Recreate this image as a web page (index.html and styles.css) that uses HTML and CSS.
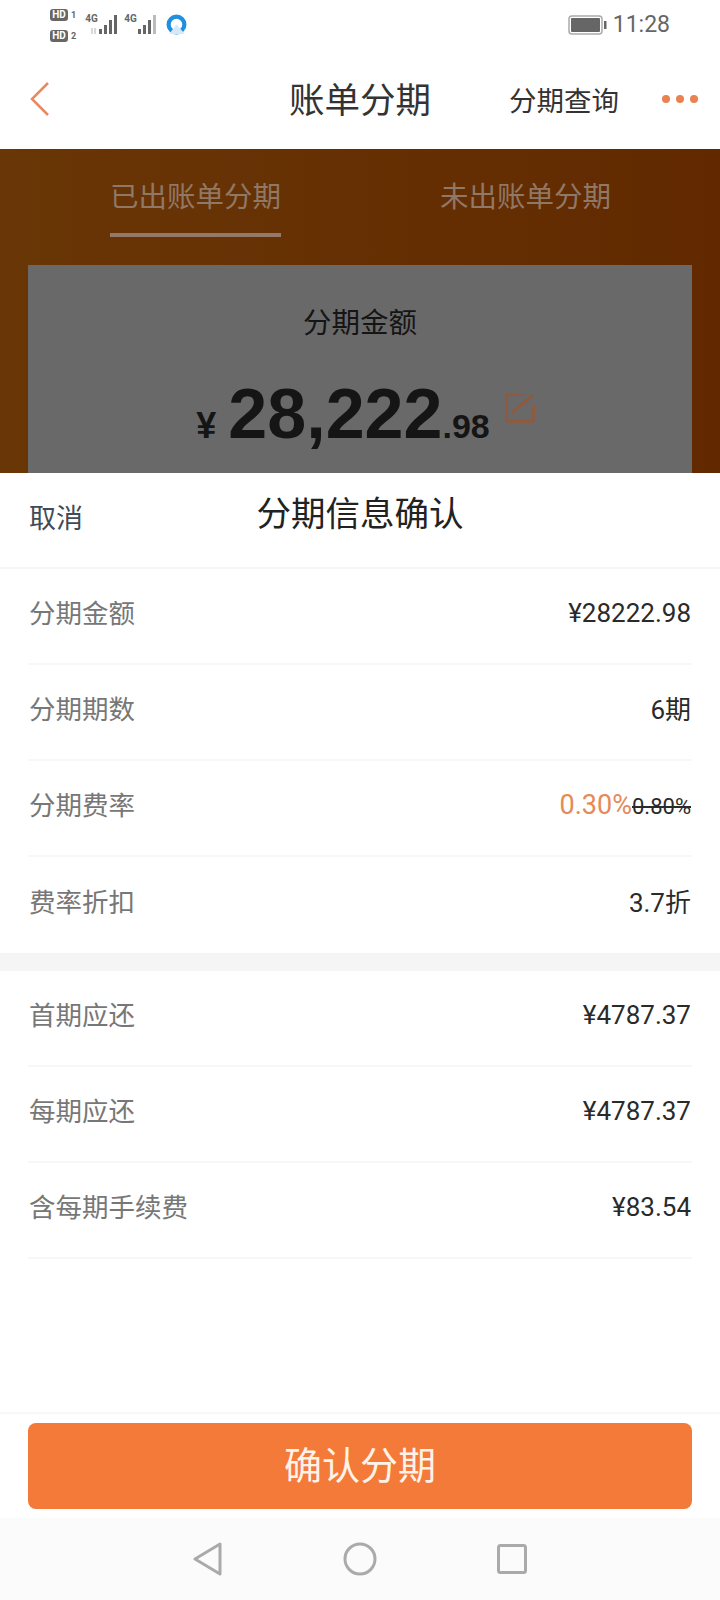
FILE: index.html
```html
<!DOCTYPE html>
<html lang="zh-CN">
<head>
  <meta charset="UTF-8">
  <meta name="viewport" content="width=device-width, initial-scale=1.0">
  <title>账单分期</title>
  <link rel="stylesheet" href="styles.css">
</head>
<body>
  <!-- status bar -->
  <div class="status-bar">
    <div class="status-left">
      <div class="sim-col">
        <div class="sim-row"><span class="hd">HD</span><span class="sim-num">1</span></div>
        <div class="sim-row"><span class="hd">HD</span><span class="sim-num">2</span></div>
      </div>
      <div class="signal">
        <span class="net">4G</span>
        <svg width="22" height="21" viewBox="0 0 22 21"><path d="M-6 14 V20 M-3 14 V20" stroke="#ccc" stroke-width="1.5"/><g fill="#666"><rect x="1" y="15" width="3" height="5"/><rect x="6" y="11" width="3" height="9"/><rect x="11" y="6" width="3" height="14"/><rect x="16" y="1" width="3" height="19"/></g></svg>
      </div>
      <div class="signal">
        <span class="net">4G</span>
        <svg width="22" height="21" viewBox="0 0 22 21"><g fill="#666"><rect x="1" y="15" width="3" height="5"/><rect x="6" y="11" width="3" height="9"/><rect x="11" y="6" width="3" height="14"/></g><rect x="16" y="1" width="3" height="19" fill="#bbb"/></svg>
      </div>
      <svg class="app-icon" width="21" height="21" viewBox="0 0 20 20"><circle cx="10" cy="10" r="7.5" fill="none" stroke="#1f8fe0" stroke-width="4"/><path d="M3 19 L10 10 L18 19 Z" fill="#d5e9f8"/></svg>
    </div>
    <div class="status-right">
      <svg width="40" height="20" viewBox="0 0 40 20"><rect x="1" y="1" width="33" height="18" rx="3" fill="none" stroke="#aaa" stroke-width="1.5"/><rect x="3" y="3" width="29" height="14" rx="1" fill="#666"/><rect x="36" y="6" width="2.5" height="8" fill="#666"/></svg>
      <span class="time">11:28</span>
    </div>
  </div>

  <!-- title bar -->
  <div class="nav-bar">
    <svg class="back" width="20" height="34" viewBox="0 0 20 34"><path d="M18 1 L2 17 L18 33" fill="none" stroke="#e88a60" stroke-width="2.5"/></svg>
    <h1 class="nav-title">账单分期</h1>
    <span class="nav-link">分期查询</span>
    <div class="dots"><i></i><i></i><i></i></div>
  </div>

  <!-- dimmed page behind the sheet -->
  <div class="backdrop">
    <div class="tabs">
      <div class="tab active">已出账单分期</div>
      <div class="tab">未出账单分期</div>
    </div>
    <div class="amount-card">
      <div class="amount-label">分期金额</div>
      <div class="amount">
        <span class="yen">¥</span><span class="big">28,222</span><span class="cents">.98</span>
        <svg class="edit" width="30" height="30" viewBox="0 0 30 30"><path d="M19 1.5 H5 Q1.5 1.5 1.5 5 V25 Q1.5 28.5 5 28.5 H25 Q28.5 28.5 28.5 25 V12" fill="none" stroke="#8e5a40" stroke-width="3"/><path d="M7 20 L28 2" fill="none" stroke="#8e5a40" stroke-width="3"/></svg>
      </div>
    </div>
  </div>

  <!-- bottom sheet -->
  <div class="sheet">
    <div class="sheet-head">
      <span class="cancel">取消</span>
      <span class="sheet-title">分期信息确认</span>
    </div>
    <div class="group">
      <div class="row"><span class="key">分期金额</span><span class="val">¥28222.98</span></div>
      <div class="row"><span class="key">分期期数</span><span class="val lift">6期</span></div>
      <div class="row"><span class="key">分期费率</span><span class="val"><span class="rate">0.30%</span><s class="old-rate">0.80%</s></span></div>
      <div class="row last"><span class="key">费率折扣</span><span class="val lift">3.7折</span></div>
    </div>
    <div class="band"></div>
    <div class="group grow">
      <div class="row"><span class="key">首期应还</span><span class="val">¥4787.37</span></div>
      <div class="row"><span class="key">每期应还</span><span class="val">¥4787.37</span></div>
      <div class="row"><span class="key">含每期手续费</span><span class="val">¥83.54</span></div>
    </div>
    <div class="sheet-foot">
      <button class="confirm">确认分期</button>
    </div>
  </div>

  <!-- system navigation -->
  <div class="sys-nav">
    <svg width="30" height="34" viewBox="0 0 30 34"><path d="M27 2 V32 L2 17 Z" fill="none" stroke="#aaa" stroke-width="3" stroke-linejoin="round"/></svg>
    <svg width="34" height="34" viewBox="0 0 34 34"><circle cx="17" cy="17" r="15" fill="none" stroke="#aaa" stroke-width="3"/></svg>
    <svg width="30" height="30" viewBox="0 0 30 30"><rect x="1.5" y="1.5" width="27" height="27" rx="2" fill="none" stroke="#aaa" stroke-width="3"/></svg>
  </div>
</body>
</html>
```

FILE: styles.css
```css
* {
  box-sizing: border-box;
}
body {
  margin: 0;
  width: 720px;
  height: 1600px;
  display: flex;
  flex-direction: column;
  overflow: hidden;
  background-color: #fff;
  font-family: Roboto, "Noto Sans CJK SC", sans-serif;
  color: #222;
}

/* status bar */
.status-bar {
  height: 50px;
  display: flex;
  justify-content: space-between;
  padding: 9px 50px 0 50px;
}
.status-left {
  display: flex;
  align-items: flex-start;
}
.sim-col {
  display: flex;
  flex-direction: column;
  gap: 9px;
}
.sim-row {
  display: flex;
  align-items: center;
  gap: 3px;
  height: 12px;
}
.hd {
  background-color: #666;
  color: #fff;
  font-size: 10px;
  font-weight: 700;
  line-height: 12px;
  width: 18px;
  text-align: center;
  border-radius: 3px;
}
.sim-num {
  font-size: 9px;
  font-weight: 700;
  color: #666;
}
.signal {
  position: relative;
  margin-left: 10px;
  margin-top: 5px;
  padding-left: 12px;
  height: 21px;
  width: 34px;
}
.signal + .signal {
  margin-left: 5px;
}
.net {
  position: absolute;
  left: -1px;
  top: -1px;
  font-size: 10px;
  font-weight: 700;
  color: #666;
}
.signal svg {
  overflow: visible;
}
.app-icon {
  margin: 5px 0 0 7px;
}
.status-right {
  display: flex;
  align-items: flex-start;
  gap: 5px;
  padding-top: 6px;
}
.time {
  font-size: 23px;
  line-height: 20px;
  color: #666;
}

/* title bar */
.nav-bar {
  position: relative;
  height: 99px;
  display: flex;
  align-items: center;
  padding: 0 22px 2px 30px;
}
.nav-title {
  position: absolute;
  left: 0;
  right: 0;
  margin: 0 0 3px;
  text-align: center;
  font-size: 35.5px;
  font-weight: 400;
  color: #333;
}
.nav-link {
  margin-left: auto;
  font-size: 27.5px;
  color: #333;
}
.dots {
  display: flex;
  gap: 6px;
  margin-left: 43px;
}
.dots i {
  width: 8px;
  height: 8px;
  border-radius: 50%;
  background-color: #e8824f;
}

/* dimmed page */
.backdrop {
  height: 324px;
  overflow: hidden;
  padding: 0 28px;
  background: linear-gradient(90deg, #693606, #622900);
}
.tabs {
  height: 116px;
  display: flex;
  justify-content: space-between;
  padding: 0 81px 0 82px;
}
.tab {
  height: 88px;
  padding-top: 26px;
  font-size: 28.5px;
  line-height: 46px;
  color: #8f7865;
  border-bottom: 4px solid transparent;
}
.tab.active {
  border-bottom-color: #94796a;
}
.amount-card {
  height: 240px;
  background-color: #696969;
  color: #151515;
  text-align: center;
}
.amount-label {
  padding-top: 38px;
  font-size: 28.5px;
  line-height: 42px;
}
.amount {
  display: flex;
  justify-content: center;
  align-items: baseline;
  margin-top: 31px;
  padding-left: 11px;
  font-family: "Liberation Sans", sans-serif;
  font-weight: 700;
  line-height: 76px;
}
.yen {
  font-size: 36px;
  margin-right: 12px;
}
.big {
  font-size: 70px;
}
.cents {
  font-size: 34px;
}
.edit {
  align-self: flex-start;
  margin: 17px 0 0 15px;
}

/* sheet */
.sheet {
  flex: 1;
  display: flex;
  flex-direction: column;
  background-color: #fff;
}
.sheet-head {
  position: relative;
  height: 96px;
  display: flex;
  align-items: center;
  padding: 0 29px 8px;
  border-bottom: 2px solid #f5f5f5;
}
.cancel {
  font-size: 27px;
  color: #3f4c57;
}
.sheet-title {
  position: absolute;
  left: 0;
  right: 0;
  margin-bottom: 10px;
  text-align: center;
  font-size: 34.5px;
  color: #222;
}
.group {
  padding: 0 28px;
}
.grow {
  flex: 1;
}
.row {
  height: 96px;
  display: flex;
  justify-content: space-between;
  align-items: center;
  padding-bottom: 6px;
  border-bottom: 2px solid #f7f7f7;
  font-size: 26px;
}
.row.last {
  border-bottom: 0;
}
.key {
  padding: 0 0 4px 1px;
  font-size: 26.5px;
  color: #777;
}
.val {
  padding-right: 1px;
  color: #2a2a2a;
}
.val.lift {
  padding-bottom: 4px;
}
.rate {
  font-size: 27px;
  color: #e58a58;
}
.old-rate {
  font-size: 22px;
  color: #2a2a2a;
}
.band {
  height: 18px;
  background-color: #f5f5f5;
}
.sheet-foot {
  height: 106px;
  padding: 9px 28px 0;
  border-top: 2px solid #f8f8f8;
}
.confirm {
  display: block;
  width: 100%;
  height: 86px;
  padding: 0 0 8px;
  border: 0;
  border-radius: 8px;
  background-color: #f47a3a;
  color: #fff3e8;
  font-family: inherit;
  font-size: 38px;
}

/* system navigation */
.sys-nav {
  height: 82px;
  display: flex;
  align-items: center;
  justify-content: center;
  gap: 120px;
  background-color: #fbfbfb;
}
```
